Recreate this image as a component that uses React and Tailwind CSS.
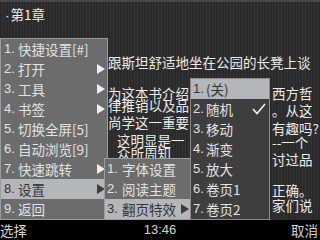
import clsx from 'clsx';

const Arrow = ({ dark }) => (
    <svg width="8" height="10" viewBox="0 0 8 10" className="ml-auto shrink-0">
        <path d="M0 0 L8 5 L0 10 Z" fill={dark ? '#3c3c3c' : '#f0f0f0'} />
    </svg>
);

function Item({ n, label, arrow, active, pad, numW, check }) {
    return (
        <div
            className={clsx(
                'h-[20px] flex items-center pr-[2px] whitespace-nowrap',
                pad,
                active ? 'bg-[#b3b7bb] text-[#353535]' : 'text-[#e2e2e2]'
            )}
        >
            <span className={clsx("font-['Liberation_Sans'] text-[13px] shrink-0", numW)}>{n}.</span>
            <span>{label}</span>
            {arrow && <Arrow dark={active} />}
            {check && (
                <svg width="14" height="12" viewBox="0 0 14 12" className="ml-auto mr-[1px]">
                    <path d="M1 6 L5 10.5 L13 1" fill="none" stroke="#f2f2f2" strokeWidth="1.6" />
                </svg>
            )}
        </div>
    );
}

const mainMenu = [
    { label: '快捷设置[#]' },
    { label: '打开', arrow: true },
    { label: '工具', arrow: true },
    { label: '书签', arrow: true },
    { label: '切换全屏[5]' },
    { label: '自动浏览[9]' },
    { label: '快速跳转', arrow: true },
    { label: '设置', arrow: true, active: true },
    { label: '返回' },
];

const settingsMenu = [
    { label: '字体设置' },
    { label: '阅读主题' },
    { label: '翻页特效', arrow: true, active: true },
];

const effectMenu = [
    { label: '(关)', active: true },
    { label: '随机', check: true },
    { label: '移动' },
    { label: '渐变' },
    { label: '放大' },
    { label: '卷页1' },
    { label: '卷页2' },
];

export default function App() {
    return (
        <div className="w-[320px] h-[240px] relative overflow-hidden flex flex-col text-[13.5px] font-['Noto_Sans_CJK_SC',sans-serif]">
            {/* Reader page */}
            <div className="flex-1 flex flex-col bg-[repeating-linear-gradient(90deg,#2a2a2a_0px,#2a2a2a_2px,#333333_2px,#333333_3px)] text-[#ececec] whitespace-nowrap">
                <div className="h-[2px] bg-[#474747]" />
                <div className="h-[16px] leading-[16px] mt-[4px] pl-[5px]">
                    <span className="font-['Liberation_Sans'] mr-[1px]">·</span>第1章
                </div>
                <div className="h-[16px] leading-[16px] mt-[32px] pl-[108px]">跟斯坦舒适地坐在公园的长凳上谈</div>
                <div className="flex">
                    <div className="w-[272px] pl-[108px]">
                        <div className="w-[82px] overflow-hidden">
                            <div className="h-[16px] leading-[16px] mt-[15px]">为这本书介绍了</div>
                            <div className="h-[16px] leading-[16px] -mt-[4px]">律推销以及品</div>
                            <div className="h-[16px] leading-[16px] mt-[1px]">尚学这一重要</div>
                            <div className="h-[16px] leading-[16px] mt-[2px] pl-[9px]">这明显是一</div>
                            <div className="h-[16px] leading-[16px] -mt-[3px] pl-[9px]">众所周知</div>
                        </div>
                    </div>
                    <div className="flex-1">
                        <div className="h-[16px] leading-[16px] mt-[15px]">西方哲</div>
                        <div className="h-[16px] leading-[16px] mt-[1px]">。从这</div>
                        <div className="h-[16px] leading-[16px] mt-[2px]">有趣吗?</div>
                        <div className="h-[16px] leading-[16px] -mt-[2px]">--一个</div>
                        <div className="h-[16px] leading-[16px] mt-[1px]">讨过品</div>
                        <div className="h-[16px] leading-[16px] mt-[15px]">正确。</div>
                        <div className="h-[16px] leading-[16px] -mt-[1px]">家们说</div>
                    </div>
                </div>
            </div>

            {/* Soft key bar */}
            <div className="h-[20px] bg-black grid grid-cols-3 items-center text-[#d4d4d4] leading-[20px]">
                <span>选择</span>
                <span className="text-center font-['Liberation_Sans'] text-[13px]">13:46</span>
                <span className="text-right pr-[2px]">取消</span>
            </div>

            {/* Main menu */}
            <div className="absolute left-0 top-[38px] w-[108px] h-[182px] bg-[#6c6c6c] border border-[#9c9c9c]">
                {mainMenu.map((m, i) => (
                    <Item key={i} n={i + 1} {...m} pad="pl-[3px]" numW="w-[14px]" />
                ))}
            </div>

            {/* Settings submenu */}
            <div className="absolute left-[104px] top-[158px] w-[88px] h-[62px] bg-[#6c6c6c] border border-[#9c9c9c]">
                {settingsMenu.map((m, i) => (
                    <Item key={i} n={i + 1} {...m} pad="pl-[2px]" numW="w-[15px]" />
                ))}
            </div>

            {/* Page effect submenu */}
            <div className="absolute left-[190px] top-[78px] w-[80px] h-[142px] bg-[#3e3e3e] border border-[#8c8c8c]">
                {effectMenu.map((m, i) => (
                    <Item key={i} n={i + 1} {...m} pad="pl-[2px]" numW="w-[13px]" />
                ))}
            </div>
        </div>
    );
}
